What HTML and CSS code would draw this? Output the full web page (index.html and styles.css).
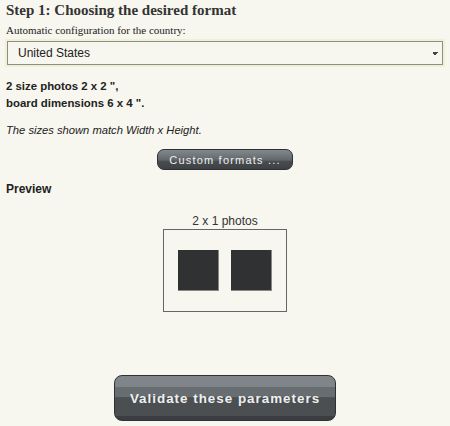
FILE: index.html
```html
<!DOCTYPE html>
<html lang="en">
<head>
    <meta charset="UTF-8">
    <title>Step 1</title>
    <link rel="stylesheet" href="styles.css">
</head>
<body>
    <div class="step">
        <h2>Step 1: Choosing the desired format</h2>
        <label for="country">Automatic configuration for the country:</label>
        <div class="select-wrap">
            <select id="country">
                <option>United States</option>
            </select>
        </div>

        <p class="summary">2 size photos 2 x 2 ",<br>board dimensions 6 x 4 ".</p>
        <p class="note">The sizes shown match Width x Height.</p>

        <div class="center">
            <button class="btn btn-small">Custom formats ...</button>
        </div>

        <h3>Preview</h3>
        <div class="preview">
            <div class="preview-title">2 x 1 photos</div>
            <div class="board">
                <div class="photo"></div>
                <div class="photo"></div>
            </div>
        </div>

        <div class="center">
            <button class="btn btn-big">Validate these parameters</button>
        </div>
    </div>
</body>
</html>
```

FILE: styles.css
```css
body {
    margin: 0;
    background-color: #f7f6ef;
    font-family: "Liberation Sans", Arial, sans-serif;
    color: #222;
}
.step {
    padding: 0 6px;
}
h2 {
    font-family: "Liberation Serif", serif;
    font-size: 15px;
    color: #333;
    margin: 0;
    padding-top: 1px;
    line-height: 18px;
}
label {
    display: block;
    font-family: "Liberation Serif", serif;
    font-size: 11px;
    margin-top: 5px;
    line-height: 13px;
}
.select-wrap {
    margin-top: 2px;
    border: 2px solid #f1f0d2;
    margin-left: -1px;
    margin-right: -1px;
}
select {
    display: block;
    width: 100%;
    height: 24px;
    border: 1px solid #8a8f8e;
    background-color: #f7f6ef;
    font-family: "Liberation Sans", Arial, sans-serif;
    font-size: 12px;
    color: #222;
    padding: 0 10px;
    appearance: none;
    background-image: linear-gradient(45deg, transparent 50%, #444 50%), linear-gradient(135deg, #444 50%, transparent 50%);
    background-size: 3px 3px, 3px 3px;
    background-position: right 7px center, right 4px center;
    background-repeat: no-repeat;
    border-radius: 0;
}
.summary {
    font-size: 11.4px;
    font-weight: bold;
    line-height: 17px;
    margin: 11px 0 0;
}
.note {
    font-size: 11.2px;
    font-style: italic;
    margin: 12px 0 0;
}
.center {
    text-align: center;
}
.btn {
    font-family: "Liberation Sans", Arial, sans-serif;
    color: #eef0f0;
    border: 1px solid #2e3234;
    cursor: pointer;
}
.btn-small {
    margin-top: 13px;
    padding: 0 11px;
    height: 21px;
    font-size: 11px;
    letter-spacing: 1.2px;
    border-radius: 7px;
    background: linear-gradient(#82888c 0%, #70767a 30%, #5f6468 55%, #4a4e51 56%, #3e4144 100%);
}
h3 {
    font-size: 12px;
    margin: 12px 0 0;
}
.preview {
    display: flex;
    flex-direction: column;
    align-items: center;
    margin-top: 18px;
}
.preview-title {
    font-size: 12px;
    color: #333;
}
.board {
    margin-top: 1px;
    width: 122px;
    height: 81px;
    border: 1px solid #666;
    display: flex;
    justify-content: center;
    align-items: center;
    gap: 12px;
}
.photo {
    width: 41px;
    height: 41px;
    background-color: #2f3133;
    border-right: 1px solid #888;
    border-bottom: 1px solid #888;
    box-sizing: border-box;
}
.btn-big {
    margin-top: 63px;
    width: 222px;
    height: 46px;
    font-size: 13.4px;
    font-weight: bold;
    letter-spacing: 1px;
    border-radius: 8px;
    background: linear-gradient(#7f8589 0%, #7f8589 24%, #686d71 25%, #686d71 48%, #4b4f52 49%, #4b4f52 90%, #3b3e40 91%, #3b3e40 100%);
}
```
